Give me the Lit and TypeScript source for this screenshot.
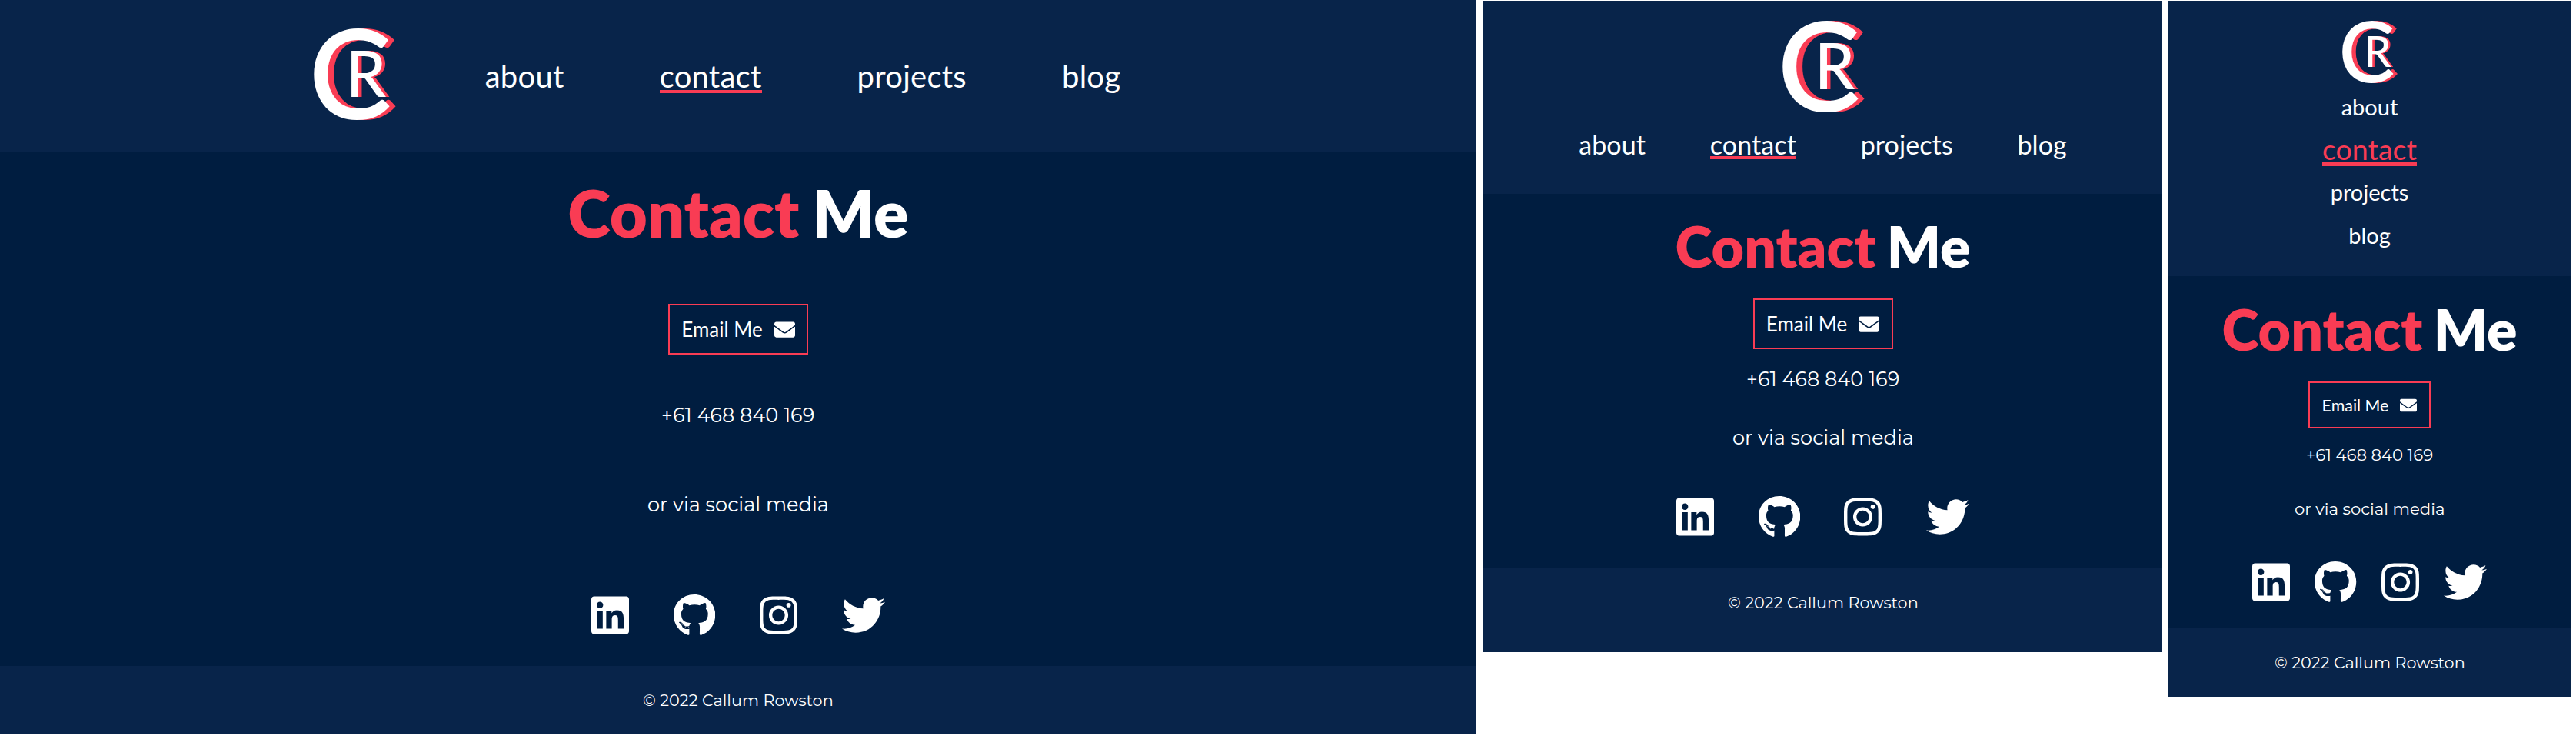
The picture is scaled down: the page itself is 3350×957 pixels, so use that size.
import { LitElement, html, css, svg } from "lit";
import { customElement, property } from "lit/decorators.js";

const ICONS: Record<string, { w: number; d: string }> = {
  envelope: {
    w: 512,
    d: "M502.3 190.8c3.9-3.1 9.7-.2 9.7 4.7V400c0 26.5-21.5 48-48 48H48c-26.5 0-48-21.5-48-48V195.6c0-5 5.7-7.8 9.7-4.7 22.4 17.4 52.1 39.5 154.1 113.6 21.1 15.4 56.7 47.8 92.2 47.6 35.7.3 72-32.8 92.3-47.6 102-74.1 131.6-96.3 154-113.7zM256 320c23.2.4 56.6-29.2 73.4-41.4 132.7-96.3 142.8-104.7 173.4-128.7 5.8-4.5 9.2-11.5 9.2-18.9v-19c0-26.5-21.5-48-48-48H48c-26.5 0-48 21.5-48 48v19c0 7.4 3.4 14.3 9.2 18.9 30.6 23.9 40.7 32.4 173.4 128.7 16.8 12.2 50.2 41.8 73.4 41.4z",
  },
  linkedin: {
    w: 448,
    d: "M416 32H31.9C14.3 32 0 46.5 0 64.3v383.4C0 465.5 14.3 480 31.9 480H416c17.6 0 32-14.5 32-32.3V64.3c0-17.8-14.4-32.3-32-32.3zM135.4 416H69V202.2h66.5V416zm-33.2-243c-21.3 0-38.5-17.3-38.5-38.5S80.9 96 102.2 96c21.2 0 38.5 17.3 38.5 38.5 0 21.3-17.2 38.5-38.5 38.5zm282.1 243h-66.4V312c0-24.8-.5-56.7-34.5-56.7-34.6 0-39.9 27-39.9 54.9V416h-66.4V202.2h63.7v29.2h.9c8.9-16.8 30.6-34.5 62.9-34.5 67.2 0 79.7 44.3 79.7 101.9V416z",
  },
  github: {
    w: 496,
    d: "M165.9 397.4c0 2-2.3 3.6-5.2 3.6-3.3.3-5.6-1.3-5.6-3.6 0-2 2.3-3.6 5.2-3.6 3-.3 5.6 1.3 5.6 3.6zm-31.1-4.5c-.7 2 1.3 4.3 4.3 4.9 2.6 1 5.6 0 6.2-2s-1.3-4.3-4.3-5.2c-2.6-.7-5.5.3-6.2 2.3zm44.2-1.7c-2.9.7-4.9 2.6-4.6 4.9.3 2 2.9 3.3 5.9 2.6 2.9-.7 4.9-2.6 4.6-4.6-.3-1.9-3-3.2-5.9-2.9zM244.8 8C106.1 8 0 113.3 0 252c0 110.9 69.8 205.8 169.5 239.2 12.8 2.3 17.3-5.6 17.3-12.1 0-6.2-.3-40.4-.3-61.4 0 0-70 15-84.7-29.8 0 0-11.4-29.1-27.8-36.6 0 0-22.9-15.7 1.6-15.4 0 0 24.9 2 38.6 25.8 21.9 38.6 58.6 27.5 72.9 20.9 2.3-16 8.8-27.1 16-33.7-55.9-6.2-112.3-14.3-112.3-110.5 0-27.5 7.6-41.3 23.6-58.9-2.6-6.5-11.1-33.3 2.6-67.9 20.9-6.5 69 27 69 27 20-5.6 41.5-8.5 62.8-8.5s42.8 2.9 62.8 8.5c0 0 48.1-33.6 69-27 13.7 34.7 5.2 61.4 2.6 67.9 16 17.7 25.8 31.5 25.8 58.9 0 96.5-58.9 104.2-114.8 110.5 9.2 7.9 17 22.9 17 46.4 0 33.7-.3 75.4-.3 83.6 0 6.5 4.6 14.4 17.3 12.1C428.2 457.8 496 362.9 496 252 496 113.3 383.5 8 244.8 8zM97.2 352.9c-1.3 1-1 3.3.7 5.2 1.6 1.6 3.9 2.3 5.2 1 1.3-1 1-3.3-.7-5.2-1.6-1.6-3.9-2.3-5.2-1zm-10.8-8.1c-.7 1.3.3 2.9 2.3 3.9 1.6 1 3.6.7 4.3-.7.7-1.3-.3-2.9-2.3-3.9-2-.6-3.6-.3-4.3.7zm32.4 35.6c-1.6 1.3-1 4.3 1.3 6.2 2.3 2.3 5.2 2.6 6.5 1 1.3-1.3.7-4.3-1.3-6.2-2.2-2.3-5.2-2.6-6.5-1zm-11.4-14.7c-1.6 1-1.6 3.6 0 5.9 1.6 2.3 4.3 3.3 5.6 2.3 1.6-1.3 1.6-3.9 0-6.2-1.4-2.3-4-3.3-5.6-2z",
  },
  instagram: {
    w: 448,
    d: "M224.1 141c-63.6 0-114.9 51.3-114.9 114.9s51.3 114.9 114.9 114.9S339 319.5 339 255.9 287.7 141 224.1 141zm0 189.6c-41.1 0-74.7-33.5-74.7-74.7s33.5-74.7 74.7-74.7 74.7 33.5 74.7 74.7-33.6 74.7-74.7 74.7zm146.4-194.3c0 14.9-12 26.8-26.8 26.8-14.9 0-26.8-12-26.8-26.8s12-26.8 26.8-26.8 26.8 12 26.8 26.8zm76.1 27.2c-1.7-35.9-9.9-67.7-36.2-93.9-26.2-26.2-58-34.4-93.9-36.2-37-2.1-147.9-2.1-184.9 0-35.8 1.7-67.6 9.9-93.9 36.1s-34.4 58-36.2 93.9c-2.1 37-2.1 147.9 0 184.9 1.7 35.9 9.9 67.7 36.2 93.9s58 34.4 93.9 36.2c37 2.1 147.9 2.1 184.9 0 35.9-1.7 67.7-9.9 93.9-36.2 26.2-26.2 34.4-58 36.2-93.9 2.1-37 2.1-147.8 0-184.8zM398.8 388c-7.8 19.6-22.9 34.7-42.6 42.6-29.5 11.7-99.5 9-132.1 9s-102.7 2.6-132.1-9c-19.6-7.8-34.7-22.9-42.6-42.6-11.7-29.5-9-99.5-9-132.1s-2.6-102.7 9-132.1c7.8-19.6 22.9-34.7 42.6-42.6 29.5-11.7 99.5-9 132.1-9s102.7-2.6 132.1 9c19.6 7.8 34.7 22.9 42.6 42.6 11.7 29.5 9 99.5 9 132.1s2.7 102.7-9 132.1z",
  },
  twitter: {
    w: 512,
    d: "M459.37 151.716c.325 4.548.325 9.097.325 13.645 0 138.72-105.583 298.558-298.558 298.558-59.452 0-114.68-17.219-161.137-47.106 8.447.974 16.568 1.299 25.34 1.299 49.055 0 94.213-16.568 130.274-44.832-46.132-.975-84.792-31.188-98.112-72.772 6.498.974 12.995 1.624 19.818 1.624 9.421 0 18.843-1.3 27.614-3.573-48.081-9.747-84.143-51.98-84.143-102.985v-1.299c13.969 7.797 30.214 12.67 47.431 13.319-28.264-18.843-46.781-51.005-46.781-87.391 0-19.492 5.197-37.36 14.294-52.954 51.655 63.675 129.3 105.258 216.365 109.807-1.624-7.797-2.599-15.918-2.599-24.04 0-57.828 46.782-104.934 104.934-104.934 30.213 0 57.502 12.67 76.67 33.137 23.715-4.548 46.456-13.32 66.599-25.34-7.798 24.366-24.366 44.833-46.132 57.827 21.117-2.273 41.584-8.122 60.426-16.243-14.292 20.791-32.161 39.308-52.628 54.253z",
  },
};

const icon = (name: string) => html`<svg class="icon ${name}" viewBox="0 0 ${ICONS[name].w} 512" fill="currentColor">
  ${svg`<path d=${ICONS[name].d}></path>`}
</svg>`;

/** A single line of body text, set to a fixed measure. */
@customElement("fit-text")
class FitText extends LitElement {
  @property() text = "";
  @property({ type: Number }) measure = 200;
  @property({ type: Number }) size = 24;

  static styles = css`
    :host {
      display: block;
      line-height: 0;
    }
    .line {
      display: block;
      overflow: visible;
      fill: #fff;
      font-family: Montserrat, Inter, sans-serif;
      font-weight: 400;
    }
  `;

  render() {
    const h = Math.round(this.size);
    return html`<svg class="line" width=${this.measure} height=${h}>
      <text x="0" y=${h} font-size=${this.size} textLength=${this.measure} lengthAdjust="spacingAndGlyphs">${this.text}</text>
    </svg>`;
  }
}

@customElement("contact-page")
class ContactPage extends LitElement {
  @property({ reflect: true }) size: "wide" | "medium" | "narrow" = "wide";

  static styles = css`
    :host {
      display: flex;
      flex-direction: column;
      flex: none;
      color: #fff;
      background: #001d40;
      font-family: Lato, sans-serif;
    }
    * {
      box-sizing: border-box;
    }
    .header,
    .footer {
      background: #08244a;
      flex: none;
    }
    .header {
      display: flex;
    }
    .nav {
      display: flex;
    }
    .logo {
      display: grid;
      flex: none;
      justify-items: start;
      align-items: start;
      width: 105px;
      height: 120px;
      font-size: 163px;
      font-weight: 500;
    }
    .initial {
      grid-area: 1 / 1;
      margin-left: -0.043em;
      line-height: 0.68;
      text-shadow: 0.049em 0 #f93c54;
    }
    .surname {
      grid-area: 1 / 1;
      margin-left: 0.99em;
      font-size: 0.51em;
      line-height: 1.39;
      margin-left: 0.503em;
      text-shadow: 0.052em 0 #f93c54;
    }
    .link {
      display: block;
      color: inherit;
      text-decoration: none;
    }
    .main {
      display: flex;
      flex-direction: column;
      align-items: center;
    }
    .title {
      margin: 0;
      font-weight: 800;
      word-spacing: -0.033em;
      white-space: nowrap;
    }
    .accent {
      color: #f93c54;
    }
    .button {
      display: flex;
      align-items: center;
      justify-content: center;
      border: 2px solid #f93c54;
      color: #fff;
      text-decoration: none;
      white-space: nowrap;
    }
    .icon {
      display: block;
      flex: none;
      height: 56px;
    }
    .social {
      display: flex;
    }
    .footer {
      display: flex;
      justify-content: center;
    }

    :host([size="wide"]) {
      width: 1920px;
      height: 955px;
    }
    :host([size="wide"]) .header {
      height: 198px;
      padding: 37px 0 0 408px;
    }
    :host([size="wide"]) .nav {
      padding: 40px 0 0 117.7px;
      gap: 124.1px;
      font-size: 40px;
      line-height: 44px;
      letter-spacing: 0.25px;
    }
    :host([size="wide"]) .active {
      height: 44px;
      border-bottom: 4px solid #f93c54;
    }
    :host([size="wide"]) .main {
      height: 668px;
      padding-top: 28px;
    }
    :host([size="wide"]) .title {
      font-size: 84.6px;
      line-height: 100px;
    }
    :host([size="wide"]) .button {
      margin-top: 69px;
    }
    :host([size="wide"]) .phone {
      margin-top: 62px;
    }
    :host([size="wide"]) .via {
      margin-top: 90px;
    }
    :host([size="wide"]) .social {
      margin-top: 107px;
    }
    :host([size="wide"]) .footer {
      height: 89px;
      padding-top: 31px;
    }

    :host([size="medium"]) {
      width: 883px;
      height: 847px;
    }
    :host([size="medium"]) .header {
      height: 251px;
      padding-top: 26px;
      flex-direction: column;
      align-items: center;
    }
    :host([size="medium"]) .nav {
      padding-top: 21px;
      gap: 83.7px;
      font-size: 34px;
      line-height: 40px;
      letter-spacing: 0.1px;
    }
    :host([size="medium"]) .active {
      height: 39px;
      border-bottom: 4px solid #f93c54;
    }
    :host([size="medium"]) .main {
      height: 487px;
      padding-top: 24px;
    }
    :host([size="medium"]) .title,
    :host([size="narrow"]) .title {
      font-size: 73.3px;
      line-height: 88px;
    }
    :host([size="medium"]) .button {
      margin-top: 24px;
    }
    :host([size="medium"]) .phone {
      margin-top: 22px;
    }
    :host([size="medium"]) .via {
      margin-top: 50px;
    }
    :host([size="medium"]) .social {
      margin-top: 66px;
    }
    :host([size="medium"]) .footer {
      height: 109px;
      padding-top: 31px;
    }

    :host([size="wide"]) .button,
    :host([size="medium"]) .button {
      width: 182px;
      height: 66px;
      gap: 15px;
      font-size: 26px;
    }
    :host([size="wide"]) .envelope,
    :host([size="medium"]) .envelope {
      height: 27px;
    }
    :host([size="wide"]) .social,
    :host([size="medium"]) .social {
      gap: 57.6px;
    }

    :host([size="narrow"]) {
      width: 525px;
      height: 905px;
    }
    :host([size="narrow"]) .header {
      height: 358px;
      padding-top: 26px;
      flex-direction: column;
      align-items: center;
    }
    :host([size="narrow"]) .logo {
      width: 71px;
      height: 81px;
      font-size: 110px;
    }
    :host([size="narrow"]) .nav {
      flex-direction: column;
      align-items: center;
      padding-top: 11px;
      font-size: 29px;
      line-height: 40px;
      gap: 16px;
    }
    :host([size="narrow"]) .active {
      height: 41px;
      margin-bottom: -2.5px;
      border-bottom: 5px solid #f93c54;
      font-size: 37.5px;
      line-height: 37px;
      color: #f93c54;
    }
    :host([size="narrow"]) .main {
      height: 458px;
      padding-top: 25px;
    }
    :host([size="narrow"]) .button {
      width: 159px;
      height: 61px;
      margin-top: 24px;
      gap: 15px;
      font-size: 21.4px;
    }
    :host([size="narrow"]) .envelope {
      height: 22px;
    }
    :host([size="narrow"]) .phone {
      margin-top: 21px;
    }
    :host([size="narrow"]) .via {
      margin-top: 49px;
    }
    :host([size="narrow"]) .social {
      margin-top: 60px;
      gap: 32.2px;
    }
    :host([size="narrow"]) .footer {
      height: 89px;
      padding-top: 31px;
    }
  `;

  render() {
    const narrow = this.size === "narrow";
    const body = narrow ? 21.2 : 25.6;
    return html`
      <header class="header">
        <div class="logo"><span class="initial">C</span><span class="surname">R</span></div>
        <nav class="nav">
          <a class="link">about</a>
          <a class="link active">contact</a>
          <a class="link">projects</a>
          <a class="link">blog</a>
        </nav>
      </header>
      <main class="main">
        <h1 class="title"><span class="accent">Contact</span> Me</h1>
        <a class="button"><span>Email Me</span>${icon("envelope")}</a>
        <fit-text class="phone" text="+61 468 840 169" .size=${body} .measure=${narrow ? 165.1 : 199.3}></fit-text>
        <fit-text class="via" text="or via social media" .size=${body} .measure=${narrow ? 195.4 : 235.9}></fit-text>
        <div class="social">
          ${icon("linkedin")}${icon("github")}${icon("instagram")}${icon("twitter")}
        </div>
      </main>
      <footer class="footer">
        <fit-text text="© 2022 Callum Rowston" .size=${20.8} .measure=${247.7}></fit-text>
      </footer>
    `;
  }
}

@customElement("app-root")
class AppRoot extends LitElement {
  static styles = css`
    :host {
      display: block;
      background: #fff;
    }
    .board {
      display: flex;
      align-items: flex-start;
      width: 3350px;
      height: 957px;
      overflow: hidden;
    }
    .medium {
      margin: 1px 7px 0 9px;
    }
    .narrow {
      margin-top: 1px;
    }
  `;

  render() {
    return html`<div class="board">
      <contact-page size="wide"></contact-page>
      <contact-page class="medium" size="medium"></contact-page>
      <contact-page class="narrow" size="narrow"></contact-page>
    </div>`;
  }
}
